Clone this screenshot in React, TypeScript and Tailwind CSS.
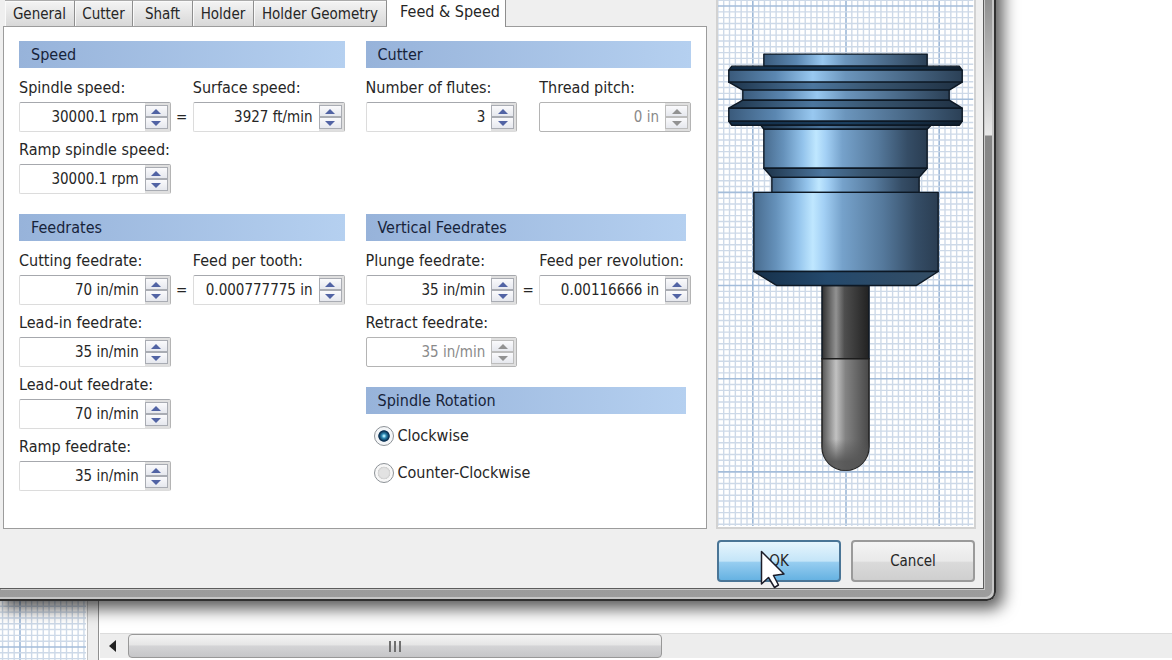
import type { ReactNode } from 'react'
import { clsx } from 'clsx'

const tabs = [
  { name: 'General', width: 'w-[70px]' },
  { name: 'Cutter', width: 'w-[58px]' },
  { name: 'Shaft', width: 'w-[60px]' },
  { name: 'Holder', width: 'w-[61px]' },
  { name: 'Holder Geometry', width: 'w-[133px]' },
]

interface FieldProps {
  id: string
  label: string
  value: string
  disabled?: boolean
  className?: string
}

function SpinButton({ label, up, disabled }: { label: string; up?: boolean; disabled?: boolean }) {
  return (
    <button
      type="button"
      aria-label={label}
      disabled={disabled}
      className={clsx(
        'flex flex-1 items-center justify-center border bg-linear-to-b from-[#fafafc] to-[#e6e8ee]',
        disabled ? 'border-[#bdbdbd]' : 'border-[#a9acb3]',
      )}
    >
      <svg width="10" height="5" viewBox="0 0 10 5" fill={disabled ? '#929292' : '#5163a4'}>
        <path d={up ? 'M5 0L10 5H0Z' : 'M0 0H10L5 5Z'} />
      </svg>
    </button>
  )
}

function Field({ id, label, value, disabled, className }: FieldProps) {
  return (
    <div className={clsx('min-w-0', className)}>
      <label htmlFor={id} className="mb-1 block whitespace-nowrap">
        {label}
      </label>
      <div
        className={clsx(
          'flex h-[30px] rounded-xs border bg-white',
          disabled ? 'border-[#b4b4b4]' : 'border-[#dcdcdc] border-t-[#a6a8ad] border-r-[#b4b4b4]',
        )}
      >
        <input
          id={id}
          type="text"
          defaultValue={value}
          disabled={disabled}
          className="min-w-0 flex-1 pr-1.5 text-right text-[15px] text-[#262626] outline-none disabled:text-[#8a8a8a]"
        />
        <div className="flex w-[25px] flex-col bg-[#dfdfdf] py-0.5 pr-0.5">
          <SpinButton up label={`Increase ${label}`} disabled={disabled} />
          <SpinButton label={`Decrease ${label}`} disabled={disabled} />
        </div>
      </div>
    </div>
  )
}

function Equals() {
  return <span className="h-[30px] text-center text-[15px] leading-[30px]">=</span>
}

function Section({ title, short, children }: { title: string; short?: boolean; children: ReactNode }) {
  return (
    <section>
      <h2
        className={clsx(
          'h-[27px] bg-linear-to-r from-[#97b3da] to-[#b5d0f0] pl-3 leading-[28px] text-[#17233a]',
          short && 'mr-[5px]',
        )}
      >
        {title}
      </h2>
      {children}
    </section>
  )
}

function FieldGrid({ children }: { children: ReactNode }) {
  return <div className="mt-2.5 grid grid-cols-[1fr_22px_1fr] items-end gap-y-2">{children}</div>
}

function Radio({ id, label, checked }: { id: string; label: string; checked?: boolean }) {
  return (
    <div className="flex items-center gap-1">
      <input
        id={id}
        type="radio"
        name="rotation"
        defaultChecked={checked}
        className="size-5 appearance-none rounded-full border border-[#8d9297] bg-[radial-gradient(circle,#e2e2e2_0_35%,#cfcfcf_48%,#f7f7f7_52%)] checked:bg-[radial-gradient(circle,#b9efff_0_4%,#2e8bb5_18%,#0c3355_38%,#0c3355_42%,#f4f6f8_48%)]"
      />
      <label htmlFor={id}>{label}</label>
    </div>
  )
}

// Major lines every 93 units, 16 minor cells in between.
function GridLines({ x, y, width, height, majorX, majorY }: Record<'x' | 'y' | 'width' | 'height' | 'majorX' | 'majorY', number>) {
  const lines: ReactNode[] = []
  const steps = (from: number, size: number, major: number) => {
    const first = Math.ceil(((from - major) * 16) / 93)
    const last = Math.floor(((from + size - major) * 16) / 93)
    return Array.from({ length: last - first + 1 }, (_, i) => first + i)
      .map((n) => ({ at: major + (n * 93) / 16, isMajor: n % 16 === 0 }))
      .sort((a, b) => Number(a.isMajor) - Number(b.isMajor))
  }
  steps(x, width, majorX).forEach(({ at, isMajor }) =>
    lines.push(<path key={`x${at}`} d={`M${at} ${y}v${height}`} stroke={isMajor ? '#9db8d8' : '#cdd9e8'} strokeWidth={isMajor ? 1.6 : 1.4} />),
  )
  steps(y, height, majorY).forEach(({ at, isMajor }) =>
    lines.push(<path key={`y${at}`} d={`M${x} ${at}h${width}`} stroke={isMajor ? '#a4bdda' : '#cdd9e8'} strokeWidth={isMajor ? 1.6 : 1.4} />),
  )
  return <g>{lines}</g>
}

function ToolPreview() {
  return (
    <svg viewBox="718 0 256 526" preserveAspectRatio="xMidYMin slice" className="absolute inset-0 size-full" role="img" aria-label="Tool preview">
      <defs>
        <linearGradient id="steel">
          <stop offset="0" stopColor="#486b8e" />
          <stop offset="0.12" stopColor="#6591ba" />
          <stop offset="0.24" stopColor="#94c4ec" />
          <stop offset="0.32" stopColor="#bfe7ff" />
          <stop offset="0.38" stopColor="#a3d0f5" />
          <stop offset="0.48" stopColor="#76a2cb" />
          <stop offset="0.7" stopColor="#55799c" />
          <stop offset="0.88" stopColor="#354d66" />
          <stop offset="1" stopColor="#2a3d52" />
        </linearGradient>
        <linearGradient id="flange">
          <stop offset="0" stopColor="#3a5a7b" />
          <stop offset="0.2" stopColor="#5b87b1" />
          <stop offset="0.36" stopColor="#98c8f0" />
          <stop offset="0.5" stopColor="#6b95bc" />
          <stop offset="0.75" stopColor="#4a6a89" />
          <stop offset="1" stopColor="#2b4056" />
        </linearGradient>
        <linearGradient id="slope">
          <stop offset="0" stopColor="#1d3349" />
          <stop offset="0.36" stopColor="#4c769e" />
          <stop offset="0.6" stopColor="#395671" />
          <stop offset="1" stopColor="#1f3042" />
        </linearGradient>
        <linearGradient id="chamfer">
          <stop offset="0" stopColor="#112a43" />
          <stop offset="0.5" stopColor="#1b3f60" />
          <stop offset="1" stopColor="#101f2e" />
        </linearGradient>
        <linearGradient id="base">
          <stop offset="0" stopColor="#16304a" />
          <stop offset="0.4" stopColor="#24496c" />
          <stop offset="1" stopColor="#344d64" />
        </linearGradient>
        <linearGradient id="shank">
          <stop offset="0" stopColor="#2f2f2f" />
          <stop offset="0.3" stopColor="#929292" />
          <stop offset="0.48" stopColor="#4e4e4e" />
          <stop offset="1" stopColor="#212121" />
        </linearGradient>
        <linearGradient id="flute">
          <stop offset="0" stopColor="#555" />
          <stop offset="0.3" stopColor="#c2c2c2" />
          <stop offset="0.5" stopColor="#838383" />
          <stop offset="1" stopColor="#484848" />
        </linearGradient>
        <linearGradient id="nose" x1="0" y1="0" x2="0" y2="1">
          <stop offset="0.72" stopColor="#555" stopOpacity="0" />
          <stop offset="0.92" stopColor="#555" stopOpacity="0.9" />
        </linearGradient>
      </defs>
      <GridLines x={718} y={0} width={255} height={525} majorX={753} majorY={6} />
      <g stroke="#0d1824" strokeWidth="1.400" strokeLinejoin="round">
        <path d="M822 285H869V358H822Z" fill="url(#shank)" />
        <path d="M822 358H869V446A23.5 23.5 0 0 1 822 446Z" fill="url(#flute)" stroke="#1d1d1d" />
        <path d="M822 358H869V446A23.5 23.5 0 0 1 822 446Z" fill="url(#nose)" stroke="none" />
        <path d="M764 54H927V66H764Z" fill="url(#flange)" />
        <path d="M732 66H959L962 70H729Z" fill="url(#chamfer)" />
        <path d="M729 70H962V82H729Z" fill="url(#flange)" />
        <path d="M729 82H962L949 90H743Z" fill="url(#slope)" />
        <path d="M743 90H949V100H743Z" fill="url(#flange)" />
        <path d="M743 100H949L962 108H729Z" fill="url(#slope)" />
        <path d="M729 108H962V121H729Z" fill="url(#flange)" />
        <path d="M729 121H962L959 125H732Z" fill="url(#chamfer)" />
        <path d="M761 125H931L927 129H764Z" fill="url(#slope)" />
        <path d="M764 129H927V168H764Z" fill="url(#steel)" />
        <path d="M764 168H927L919 177H772Z" fill="url(#slope)" />
        <path d="M772 177H919V192H772Z" fill="url(#steel)" />
        <path d="M754 192H938V271H754Z" fill="url(#steel)" />
        <path d="M754 271H938L916 285H777Z" fill="url(#base)" />
      </g>
    </svg>
  )
}

function Workspace() {
  return (
    <div className="absolute inset-0 flex items-stretch bg-white">
      <div className="relative w-[87px] shrink-0">
        <svg viewBox="0 600 87 60" preserveAspectRatio="xMinYMax meet" className="absolute bottom-0 left-0 h-[60px] w-full">
          <GridLines x={0} y={600} width={86} height={60} majorX={20} majorY={647} />
        </svg>
      </div>
      <div className="w-3 shrink-0 border-r border-l border-[#c4c4c4] border-r-[#8f8f8f] bg-[#eee]" />
      <div className="flex min-w-0 flex-1 flex-col justify-end pb-0.5 pl-px">
        <div className="flex h-[25px] border-t border-[#dcdcdc] bg-[#ededed]">
          <button type="button" aria-label="Scroll left" className="flex w-7 items-center justify-center pr-1">
            <svg width="7" height="12" viewBox="0 0 7 12" fill="#222">
              <path d="M7 0V12L0 6Z" />
            </svg>
          </button>
          <div className="flex w-[534px] items-center justify-center gap-[3px] rounded-sm border border-[#989898] bg-[linear-gradient(#f5f5f5,#e6e6e6_45%,#d4d4d6_50%,#c6c6c8)]">
            <i className="h-[11px] w-0.5 bg-[#707070]" />
            <i className="h-[11px] w-0.5 bg-[#707070]" />
            <i className="h-[11px] w-0.5 bg-[#707070]" />
          </div>
        </div>
      </div>
    </div>
  )
}

function Cursor() {
  return (
    <svg width="26" height="40" viewBox="0 0 26 40" className="pointer-events-none absolute top-[10px] left-[43px]">
      <path d="M1.500 1.500V34L8.500 27.500L14.500 37.500L18.500 35L13.500 25.500L24 24Z" fill="#fff" stroke="#1c1c28" strokeWidth="1.500" strokeLinejoin="round" />
    </svg>
  )
}

export default function App() {
  return (
    <div className="relative min-h-screen overflow-hidden font-['DejaVu_Sans_Condensed','DejaVu_Sans',sans-serif] text-base leading-5 text-[#262626] [font-stretch:condensed]">
      <Workspace />
      <main
        role="dialog"
        aria-label="Tool"
        className="relative -mt-5 mr-[176px] rounded-br-[9px] border-r-2 border-b-2 border-[#303030] bg-[linear-gradient(#909090_20px,#e8e8e8_155px,#868686_156px,#9c9c9c)] pr-2.5 pb-2.5 shadow-[inset_-2px_-2px_0_#c6c6c6,4px_5px_16px_3px_rgba(0,0,0,0.65)]"
      >
        <div className="border-r border-b border-[#5c5c5c] bg-[#efefef] pt-5 pl-[3px] shadow-[1px_1px_0_#c8c8c8]">
          <div className="flex gap-[9px] pr-[7px]">
            <div className="min-w-0 flex-1">
              <div role="tablist" className="flex h-[26px] pl-0.5">
                {tabs.map((tab) => (
                  <button
                    key={tab.name}
                    type="button"
                    role="tab"
                    aria-selected={false}
                    className={clsx(
                      'shrink-0 border-t border-r border-t-[#aaa] border-r-[#8e8e8e] bg-linear-to-b from-[#f4f4f4] to-[#d8d8d8] text-[15px] whitespace-nowrap shadow-[inset_1px_1px_0_#fafafa]',
                      tab.width,
                    )}
                  >
                    {tab.name}
                  </button>
                ))}
                <button
                  type="button"
                  role="tab"
                  aria-selected
                  className="-mb-px w-[119px] shrink-0 border-r border-[#8e8e8e] bg-white pb-1 pl-2 whitespace-nowrap"
                >
                  Feed &amp; Speed
                </button>
              </div>
              <div role="tabpanel" className="grid grid-cols-2 gap-[21px] border border-[#9c9c9c] bg-white px-[15px] pt-3.5 pb-[37px]">
                <div className="space-y-5">
                  <Section title="Speed">
                    <FieldGrid>
                      <Field id="spindle" label="Spindle speed:" value="30000.1 rpm" />
                      <Equals />
                      <Field id="surface" label="Surface speed:" value="3927 ft/min" />
                      <Field id="ramp-spindle" label="Ramp spindle speed:" value="30000.1 rpm" />
                    </FieldGrid>
                  </Section>
                  <Section title="Feedrates">
                    <FieldGrid>
                      <Field id="cutting" label="Cutting feedrate:" value="70 in/min" />
                      <Equals />
                      <Field id="tooth" label="Feed per tooth:" value="0.000777775 in" />
                      <Field id="lead-in" label="Lead-in feedrate:" value="35 in/min" />
                      <Field id="lead-out" label="Lead-out feedrate:" value="70 in/min" className="col-start-1" />
                      <Field id="ramp" label="Ramp feedrate:" value="35 in/min" className="col-start-1" />
                    </FieldGrid>
                  </Section>
                </div>
                <div className="space-y-5">
                  <div className="min-h-[153px]">
                    <Section title="Cutter">
                      <FieldGrid>
                        <Field id="flutes" label="Number of flutes:" value="3" />
                        <Field id="pitch" label="Thread pitch:" value="0 in" disabled className="col-start-3" />
                      </FieldGrid>
                    </Section>
                  </div>
                  <Section title="Vertical Feedrates" short>
                    <FieldGrid>
                      <Field id="plunge" label="Plunge feedrate:" value="35 in/min" />
                      <Equals />
                      <Field id="revolution" label="Feed per revolution:" value="0.00116666 in" />
                      <Field id="retract" label="Retract feedrate:" value="35 in/min" disabled />
                    </FieldGrid>
                  </Section>
                  <Section title="Spindle Rotation" short>
                    <div className="mt-3 flex flex-col gap-[17px] pl-2">
                      <Radio id="cw" label="Clockwise" checked />
                      <Radio id="ccw" label="Counter-Clockwise" />
                    </div>
                  </Section>
                </div>
              </div>
            </div>
            <div className="relative w-[260px] shrink-0 overflow-hidden border-2 border-t-0 border-[#d2d2d2] bg-white">
              <ToolPreview />
            </div>
          </div>
          <div className="flex justify-end gap-2.5 pt-[11px] pr-2 pb-1.5">
            <div className="relative">
              <button
                type="button"
                className="h-[42px] w-[124px] rounded-sm border-2 border-[#4a7596] bg-[linear-gradient(#e6f5fd,#c4e5f8_50%,#96cdf0_54%,#66b2e2)] text-[15px]"
              >
                OK
              </button>
              <Cursor />
            </div>
            <button
              type="button"
              className="h-[42px] w-[124px] rounded-sm border-2 border-[#9a9a9a] bg-[linear-gradient(#f4f4f4,#e9e9e9_50%,#dadada_54%,#cfcfcf)] text-[15px]"
            >
              Cancel
            </button>
          </div>
        </div>
      </main>
    </div>
  )
}
